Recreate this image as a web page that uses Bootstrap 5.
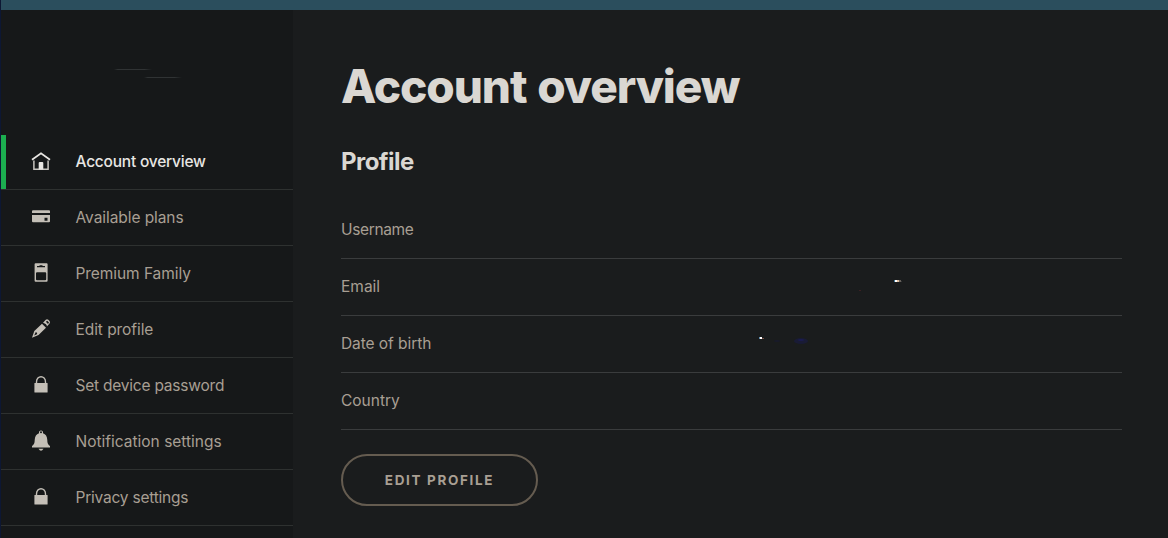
<!DOCTYPE html>
<html lang="en">
<head>
<meta charset="utf-8">
<meta name="viewport" content="width=device-width, initial-scale=1">
<title>Account overview</title>
<link href="https://cdn.jsdelivr.net/npm/bootstrap@5.3.0/dist/css/bootstrap.min.css" rel="stylesheet">
<style>
body{background:#1a1c1d;color:#a89f93;font:400 15.5px/24px Inter,"Liberation Sans",sans-serif;height:538px;border-left:1px solid #0d1733}
.topbar{height:10px;background:#2b4e5d}
.sidebar{width:292px;background:#161819;height:528px}
.brand{height:125px;padding:59px 0 0 113px}
.brand svg{display:block}
.menu-link{height:56px;border-bottom:1px solid #2e3130;color:#a89f93;text-decoration:none;padding-left:30px;gap:24.5px;padding-bottom:2px}
.menu-link.current{height:55px;color:#e8e6e3;box-shadow:inset 5px 0 #1cae50;font-weight:500}
.menu-link svg{width:20px;height:20px;fill:#c4bfb7;flex:none}
.menu-link span,.profile-row span{padding-top:2px}
.content{padding:48px 46px 0 48px}
h1{font-size:46px;font-weight:800;line-height:56px;height:56px;color:#dad7d2;letter-spacing:-1.12px;word-spacing:2px}
h2{font-size:24px;font-weight:700;line-height:31px;height:32px;color:#dad7d2;letter-spacing:-.55px;margin-top:32px}
.profile-row{height:57px;border-bottom:1px solid #3a3c3d;padding-bottom:2px}
.ls-1{letter-spacing:-.07px}
.ls-2{letter-spacing:-.22px}
.ls-3{letter-spacing:-.35px}
.btn-edit{width:197px;height:52px;border:2px solid #655c50;color:#a89f93;font-size:13.5px;font-weight:700;letter-spacing:1.65px;padding:0}
.fleck-email{margin:0 219px 2px 0}
.fleck-birth{margin:0 300px 2px 0}
</style>
</head>
<body class="overflow-hidden">
<div class="topbar"></div>
<div class="d-flex">
<nav class="sidebar flex-shrink-0">
<div class="brand"><svg width="70" height="10"><defs><linearGradient id="g1"><stop stop-color="#303334" stop-opacity="0"/><stop offset=".1" stop-color="#303334"/><stop offset=".8" stop-color="#303334"/><stop offset="1" stop-color="#303334" stop-opacity="0"/></linearGradient></defs><rect width="38" height="1" fill="url(#g1)"/><rect x="30" y="8" width="38" height="1" fill="url(#g1)"/></svg></div>
<a class="menu-link current d-flex align-items-center" href="#"><svg viewBox="0 0 20 20"><path d="M1 8.800 10 2.200l9 6.600" fill="none" stroke="#e8e6e3" stroke-width="1.700"/><path d="M2.900 9.500v8.800h14.200V9.500" fill="none" stroke="#c8c5c0" stroke-width="1.500"/><path d="M7.700 18.500V12q0-1 1-1h2.600q1 0 1 1v6.500z" fill="#e8e6e3"/></svg><span class="ls-2">Account overview</span></a>
<a class="menu-link d-flex align-items-center" href="#"><svg viewBox="0 0 20 20"><path d="M2 3.200h16a1 1 0 0 1 1 1V6H1V4.200a1 1 0 0 1 1-1z"/><path fill-rule="evenodd" d="M1 8h18v6.200a1 1 0 0 1-1 1H2a1 1 0 0 1-1-1zM13.500 10.700v3h3v-3z"/></svg><span class="ls-1">Available plans</span></a>
<a class="menu-link d-flex align-items-center" href="#"><svg viewBox="0 0 20 20"><path fill-rule="evenodd" d="M4.600 .3h11a1 1 0 0 1 1 1v16.500a1 1 0 0 1-1 1h-11a1 1 0 0 1-1-1V1.300a1 1 0 0 1 1-1zM6 4.200h8V3h-2.500V2.200h-3V3H6zM6 9.200q-1 0-1 1v6q0 1 1 1h8.200q1 0 1-1v-6q0-1-1-1z"/></svg><span class="ls-1">Premium Family</span></a>
<a class="menu-link d-flex align-items-center" href="#"><svg viewBox="0 0 20 20"><path fill-rule="evenodd" d="M1 18.700 3.300 12 11 4.700l4 4L7.500 16zM3.200 16.600 5.900 15.300 6.200 14 4.800 13.100z"/><path fill-rule="evenodd" d="M12 3.700 14.800.8q1.200-1 2.500 0l1.200 1.200q1 1.300 0 2.500L15.900 7.600q.2-2.700-3.900-3.900zM16.200 1.700 18 3.500 17 4.900 14.900 2.800z"/></svg><span class="ls-1">Edit profile</span></a>
<a class="menu-link d-flex align-items-center" href="#"><svg viewBox="0 0 20 20"><path d="M5.500 9V7C5.500 0 14.500 0 14.500 7v2" fill="none" stroke="#c4bfb7" stroke-width="1.400"/><path d="M4 8h12q.6 0 .6.600V17q0 .6-.6.6H4q-.6 0-.6-.6V8.600q0-.6.6-.6z"/></svg><span class="ls-2">Set device password</span></a>
<a class="menu-link d-flex align-items-center" href="#"><svg viewBox="0 0 20 22" style="height:22px"><path d="M8 3.200V1.800q2-2.800 4 0v1.400Q16 4.500 16.300 10c.1 3.500.7 4.500 2.700 6v1.500H1V16c2-1.500 2.600-2.500 2.700-6Q4 4.500 8 3.200z"/><circle cx="10" cy="2.300" r="1" fill="#161819"/><path d="M7.500 18.700h5q-2.500 4-5 0z"/></svg><span>Notification settings</span></a>
<a class="menu-link d-flex align-items-center" href="#"><svg viewBox="0 0 20 20"><path d="M5.500 9V7C5.500 0 14.500 0 14.500 7v2" fill="none" stroke="#c4bfb7" stroke-width="1.400"/><path d="M4 8h12q.6 0 .6.600V17q0 .6-.6.6H4q-.6 0-.6-.6V8.600q0-.6.6-.6z"/></svg><span class="ls-2">Privacy settings</span></a>
</nav>
<main class="content flex-grow-1">
<h1 class="mb-0">Account overview</h1>
<h2 class="mb-0">Profile</h2>
<section class="mt-4">
<div class="profile-row d-flex align-items-center"><span class="ls-3">Username</span></div>
<div class="profile-row d-flex align-items-center justify-content-between"><span>Email</span><svg class="fleck-email" width="46" height="14"><path fill="#437b9e" d="M37 2h1v2h-1z"/><path fill="#fff" d="M38 2h2v2h-2z"/><path fill="#dfbea1" d="M40 2h2v2h-2z"/><path fill="#66615b" d="M42 2h2v2h-2z"/><path fill="#353638" d="M44 3h1v1h-1z"/><path fill="#3b2023" d="M2 12h2v1H2z"/></svg></div>
<div class="profile-row d-flex align-items-center justify-content-between"><span class="ls-1">Date of birth</span><svg class="fleck-birth" width="64" height="14"><path fill="#628dad" d="M1 2h1v2H1z"/><path fill="#fff" d="M2 2h2v2H2z"/><path fill="#794f44" d="M4 3h2v1H4z"/><ellipse cx="43" cy="6" rx="7" ry="3" fill="#191b35"/><ellipse cx="43" cy="5" rx="3" ry="1" fill="#1b1c50"/><ellipse cx="19" cy="6" rx="3" ry="1" fill="#191b2b"/></svg></div>
<div class="profile-row d-flex align-items-center"><span>Country</span></div>
</section>
<button class="btn btn-edit rounded-pill mt-4" type="button">EDIT PROFILE</button>
</main>
</div>
<script src="https://cdn.jsdelivr.net/npm/bootstrap@5.3.0/dist/js/bootstrap.bundle.min.js"></script>
</body>
</html>
